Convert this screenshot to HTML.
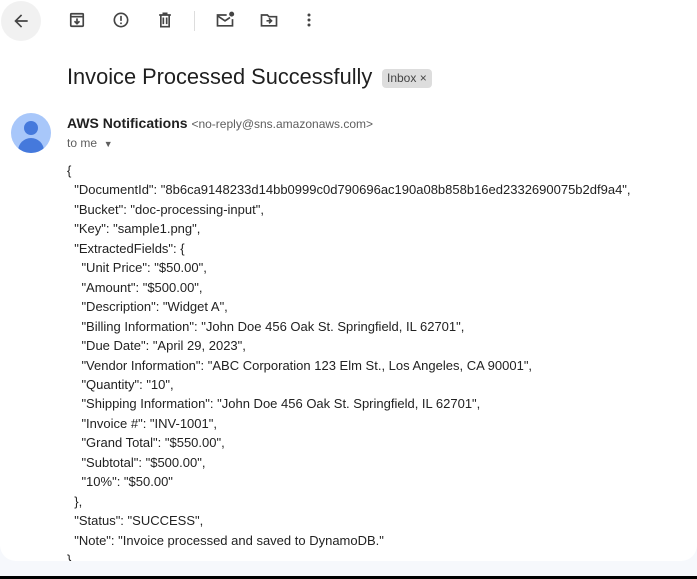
<!DOCTYPE html>
<html><head><meta charset="utf-8"><style>
body{margin:0;width:697px;height:579px;overflow:hidden;background:#f6f8fc;font-family:"Liberation Sans",Arial,sans-serif;position:relative}
.panel{position:absolute;left:0;top:0;width:697px;height:561px;background:#fff;border-radius:0 0 16px 16px}
.black{position:absolute;left:0;top:576px;width:697px;height:3px;background:#000}
.ic{position:absolute;top:10px}
.back{position:absolute;left:1px;top:1px;width:40px;height:40px;border-radius:50%;background:#f1f1f1}
h1{position:absolute;left:67px;top:64px;margin:0;font-weight:400;font-size:21.8px;color:#1f1f1f}
.tag{position:absolute;left:382px;top:69px;background:#ddd;border-radius:4px;font-size:12px;color:#444;padding:1px 5px 1px 5px;line-height:17px}
.av{position:absolute;left:11px;top:113px;width:40px;height:40px;border-radius:50%;background:#a8c7fa;overflow:hidden}
.from{position:absolute;left:67px;top:115px;font-size:14px;color:#1f1f1f}
.from b{font-weight:700}
.from span{font-size:12px;color:#5e5e5e}
.to{position:absolute;left:67px;top:136px;font-size:12px;color:#5e5e5e}
.body{position:absolute;left:67px;top:161px;font-size:13px;color:#222;line-height:19.45px;white-space:pre}
</style></head><body>
<div class="panel"></div>
<div class="back"></div>
<svg class="ic" style="left:11px;top:11px" width="20" height="20" viewBox="0 0 24 24"><path d="M20 11H7.8l5.6-5.6L12 4l-8 8 8 8 1.4-1.4L7.8 13H20z" fill="#444"/></svg>
<svg class="ic" style="left:67px" width="20" height="20" viewBox="0 0 24 24"><rect x="4.5" y="4.5" width="15" height="15" rx="1" fill="none" stroke="#444" stroke-width="2"/><path d="M4 8h16" stroke="#444" stroke-width="2"/><path d="M12 10v6M9 13.5l3 3 3-3" fill="none" stroke="#444" stroke-width="2"/></svg>
<svg class="ic" style="left:111px" width="20" height="20" viewBox="0 0 24 24"><circle cx="12" cy="12" r="8" fill="none" stroke="#444" stroke-width="2"/><path d="M12 7v6M12 15v2" stroke="#444" stroke-width="2"/></svg>
<svg class="ic" style="left:155px" width="20" height="20" viewBox="0 0 24 24"><path d="M5 6h14M9 4h6M7 6v14h10V6M10 9v8M14 9v8" fill="none" stroke="#444" stroke-width="2"/></svg>
<div style="position:absolute;left:194px;top:11px;width:1px;height:20px;background:#ddd"></div>
<svg class="ic" style="left:215px" width="20" height="20" viewBox="0 0 24 24"><path d="M14 6H3v13h18v-8" fill="none" stroke="#444" stroke-width="2"/><path d="M3 7l9 6 6-4" fill="none" stroke="#444" stroke-width="2"/><circle cx="20" cy="5" r="3" fill="#444"/></svg>
<svg class="ic" style="left:259px" width="20" height="20" viewBox="0 0 24 24"><path d="M3 6v13h18V8h-9l-2-2z" fill="none" stroke="#444" stroke-width="2"/><path d="M9 13h6M12 10l3 3-3 3" fill="none" stroke="#444" stroke-width="2"/></svg>
<svg class="ic" style="left:299px" width="20" height="20" viewBox="0 0 24 24"><circle cx="12" cy="6" r="1.8" fill="#444"/><circle cx="12" cy="12" r="1.8" fill="#444"/><circle cx="12" cy="18" r="1.8" fill="#444"/></svg>
<h1>Invoice Processed Successfully</h1>
<div class="tag">Inbox ×</div>
<div class="av"><div style="position:absolute;left:13px;top:8px;width:14px;height:14px;border-radius:50%;background:#4579dc"></div><div style="position:absolute;left:7px;top:25px;width:26px;height:20px;border-radius:13px 13px 0 0;background:#4579dc"></div></div>
<div class="from"><b>AWS Notifications</b> <span>&lt;no-reply@sns.amazonaws.com&gt;</span></div>
<div class="to">to me &nbsp;<span style="font-size:9px">▼</span></div>
<div class="body">{
  "DocumentId": "8b6ca9148233d14bb0999c0d790696ac190a08b858b16ed2332690075b2df9a4",
  "Bucket": "doc-processing-input",
  "Key": "sample1.png",
  "ExtractedFields": {
    "Unit Price": "$50.00",
    "Amount": "$500.00",
    "Description": "Widget A",
    "Billing Information": "John Doe 456 Oak St. Springfield, IL 62701",
    "Due Date": "April 29, 2023",
    "Vendor Information": "ABC Corporation 123 Elm St., Los Angeles, CA 90001",
    "Quantity": "10",
    "Shipping Information": "John Doe 456 Oak St. Springfield, IL 62701",
    "Invoice #": "INV-1001",
    "Grand Total": "$550.00",
    "Subtotal": "$500.00",
    "10%": "$50.00"
  },
  "Status": "SUCCESS",
  "Note": "Invoice processed and saved to DynamoDB."
}</div>
<div style="position:absolute;left:0;top:561px;width:697px;height:15px;background:#f6f8fc"></div>
<div class="black"></div>
</body></html>
